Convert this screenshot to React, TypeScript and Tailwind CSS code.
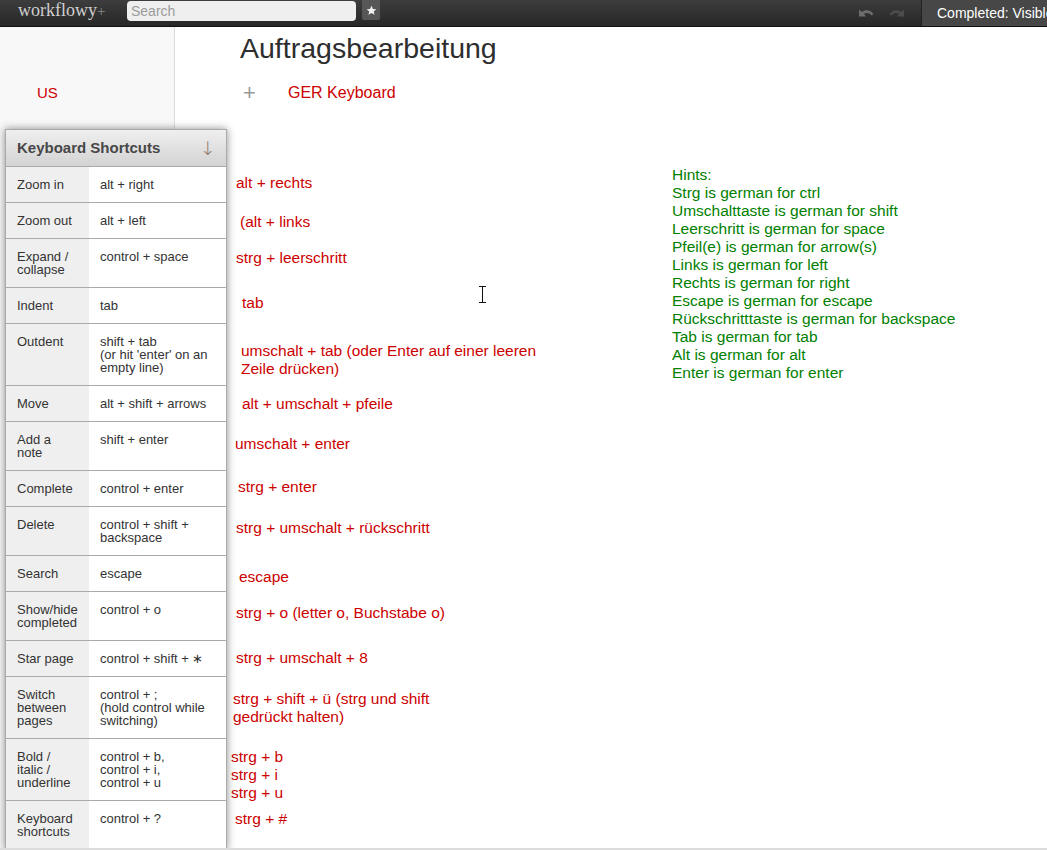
import React from 'react';

type ShortcutRow = {
  label: string[];
  keys: string[];
};

type Note = {
  lines: string[];
  className: string;
};

const shortcuts: ShortcutRow[] = [
  { label: ['Zoom in'], keys: ['alt + right'] },
  { label: ['Zoom out'], keys: ['alt + left'] },
  { label: ['Expand /', 'collapse'], keys: ['control + space'] },
  { label: ['Indent'], keys: ['tab'] },
  { label: ['Outdent'], keys: ['shift + tab', "(or hit 'enter' on an", 'empty line)'] },
  { label: ['Move'], keys: ['alt + shift + arrows'] },
  { label: ['Add a', 'note'], keys: ['shift + enter'] },
  { label: ['Complete'], keys: ['control + enter'] },
  { label: ['Delete'], keys: ['control + shift +', 'backspace'] },
  { label: ['Search'], keys: ['escape'] },
  { label: ['Show/hide', 'completed'], keys: ['control + o'] },
  { label: ['Star page'], keys: ['control + shift + ∗'] },
  { label: ['Switch', 'between', 'pages'], keys: ['control + ;', '(hold control while', 'switching)'] },
  { label: ['Bold /', 'italic /', 'underline'], keys: ['control + b,', 'control + i,', 'control + u'] },
  { label: ['Keyboard', 'shortcuts'], keys: ['control + ?'] },
];

// German translations typed next to each shortcut row
const notes: Note[] = [
  { lines: ['alt + rechts'], className: 'mt-[8px] ml-[5px]' },
  { lines: ['(alt + links'], className: 'mt-[21px] ml-[9px]' },
  { lines: ['strg + leerschritt'], className: 'mt-[18px] ml-[5px]' },
  { lines: ['tab'], className: 'mt-[27px] ml-[11px]' },
  { lines: ['umschalt + tab (oder Enter auf einer leeren', 'Zeile drücken)'], className: 'mt-[30px] ml-[10px]' },
  { lines: ['alt + umschalt + pfeile'], className: 'mt-[17px] ml-[11px]' },
  { lines: ['umschalt + enter'], className: 'mt-[22px] ml-[4px]' },
  { lines: ['strg + enter'], className: 'mt-[25px] ml-[7px]' },
  { lines: ['strg + umschalt + rückschritt'], className: 'mt-[23px] ml-[5px]' },
  { lines: ['escape'], className: 'mt-[31px] ml-[8px]' },
  { lines: ['strg + o (letter o, Buchstabe o)'], className: 'mt-[18px] ml-[5px]' },
  { lines: ['strg + umschalt + 8'], className: 'mt-[27px] ml-[5px]' },
  { lines: ['strg + shift + ü (strg und shift', 'gedrückt halten)'], className: 'mt-[23px] ml-[2px]' },
  { lines: ['strg + b', 'strg + i', 'strg + u'], className: 'mt-[22px] ml-0' },
  { lines: ['strg + #'], className: 'mt-[8px] ml-[4px]' },
];

const hints = [
  'Hints:',
  'Strg is german for ctrl',
  'Umschalttaste is german for shift',
  'Leerschritt is german for space',
  'Pfeil(e) is german for arrow(s)',
  'Links is german for left',
  'Rechts is german for right',
  'Escape is german for escape',
  'Rückschritttaste is german for backspace',
  'Tab is german for tab',
  'Alt is german for alt',
  'Enter is german for enter',
];

const UndoIcon: React.FC<{ color: string; flip?: boolean }> = ({ color, flip }) => (
  <svg
    width="17"
    height="10"
    viewBox="0 0 17 10"
    className={flip ? '-scale-x-100' : ''}
  >
    <path d="M4 4 C7 1.5 12 1.5 15.5 6 L13.5 7.5 C11 4.5 8 4.5 6 6 L8 8.5 L1 8.5 L1 1.5 Z" fill={color} />
  </svg>
);

const StarIcon: React.FC = () => (
  <svg width="11" height="11" viewBox="0 0 24 24">
    <path
      d="M12 1.5l3.2 7 7.3.6-5.6 4.9 1.8 7.3L12 17.3l-6.7 4 1.8-7.3L1.5 9.1l7.3-.6z"
      fill="#f2f2f2"
    />
  </svg>
);

const TopBar: React.FC = () => (
  <div className="flex h-[27px] shrink-0 items-start border-b border-[#111] bg-gradient-to-b from-[#3d3d3d] to-[#272727]">
    <div className="ml-[18px] w-[109px] pt-[1px] font-['Liberation_Serif',serif] text-[18px] leading-[18px] text-[#cfcfcf]">
      workflowy<span className="text-[15px] text-[#8a8a8a]">+</span>
    </div>
    <div className="mt-[1px] flex h-[20px] w-[229px] items-center rounded-[4px] bg-[#efefef] pl-[4px] text-[14px] leading-[16px] text-[#9b9b9b]">
      Search
    </div>
    <div className="ml-[6px] flex h-[20px] w-[18px] items-center justify-center rounded-b-[2px] bg-[#575757]">
      <StarIcon />
    </div>
    <div className="ml-auto flex h-[26px] items-center gap-[13px] pr-[16px]">
      <UndoIcon color="#6e6e6e" />
      <UndoIcon color="#4c4c4c" flip />
    </div>
    <div className="flex h-[26px] w-[126px] items-center whitespace-nowrap border-l border-[#222] bg-[#474747] pl-[15px] text-[14px] text-white">
      Completed: Visible
    </div>
  </div>
);

const ShortcutPanel: React.FC = () => (
  <div className="absolute left-[5px] top-[129px] w-[222px] border border-[#aaa] bg-white shadow-[0_0_8px_rgba(0,0,0,0.45)]">
    <div className="flex h-[36px] items-center justify-between bg-gradient-to-b from-[#efefef] to-[#d3d3d3] pl-[11px] pr-[10px]">
      <span className="text-[15px] font-bold leading-[18px] text-[#474747]">Keyboard Shortcuts</span>
      <span className="font-['DejaVu_Sans',sans-serif] text-[19px] font-light leading-[20px] text-[#927a6c]">↓</span>
    </div>
    {shortcuts.map((row) => (
      <div key={row.label.join(' ')} className="flex border-t border-[#aaa] text-[13px] leading-[13px] text-[#333]">
        <div className="w-[83px] shrink-0 bg-[#efefef] py-[11px] pl-[11px]">
          {row.label.map((line) => (
            <div key={line}>{line}</div>
          ))}
        </div>
        <div className="flex-1 py-[11px] pl-[11px]">
          {row.keys.map((line) => (
            <div key={line}>{line}</div>
          ))}
        </div>
      </div>
    ))}
  </div>
);

const TextCursor: React.FC = () => (
  <svg className="absolute left-[478px] top-[286px]" width="9" height="17" viewBox="0 0 9 17">
    <path d="M1 0.5h7M4.5 0.5v16M1 16.5h7" stroke="#111" strokeWidth="1" fill="none" />
  </svg>
);

export default function App() {
  return (
    <div className="relative flex h-[850px] w-[1047px] flex-col overflow-hidden bg-white font-['Liberation_Sans',Arial,sans-serif]">
      <TopBar />
      <div className="flex flex-1">
        <aside className="w-[175px] shrink-0 border-r border-[#ddd] bg-[#f8f8f8] pl-[37px] pt-[56px]">
          <div className="text-[15px] leading-[20px] text-[#cc0000]">US</div>
        </aside>

        <main className="flex-1">
          <h1 className="ml-[65px] mt-[7px] text-[28.5px] leading-[28px] text-[#2e2e2e]">Auftragsbearbeitung</h1>

          <div className="ml-[68px] mt-[21px] flex items-center">
            <span className="w-[45px] text-[22px] leading-[20px] text-[#999]">+</span>
            <span className="text-[16px] leading-[20px] text-[#cc0000]">GER Keyboard</span>
          </div>

          <div className="ml-[56px] mt-[63px] flex text-[15.5px] leading-[18px]">
            <div className="w-[441px] shrink-0 text-[#cc0000]">
              {notes.map((note) => (
                <div key={note.lines[0]} className={note.className}>
                  {note.lines.map((line) => (
                    <div key={line}>{line}</div>
                  ))}
                </div>
              ))}
            </div>
            <div className="text-[#008000]">
              {hints.map((hint) => (
                <div key={hint}>{hint}</div>
              ))}
            </div>
          </div>
        </main>
      </div>

      <ShortcutPanel />
      <TextCursor />
      <div className="absolute bottom-0 left-0 h-[2px] w-full bg-[#dcdcdc]" />
    </div>
  );
}
